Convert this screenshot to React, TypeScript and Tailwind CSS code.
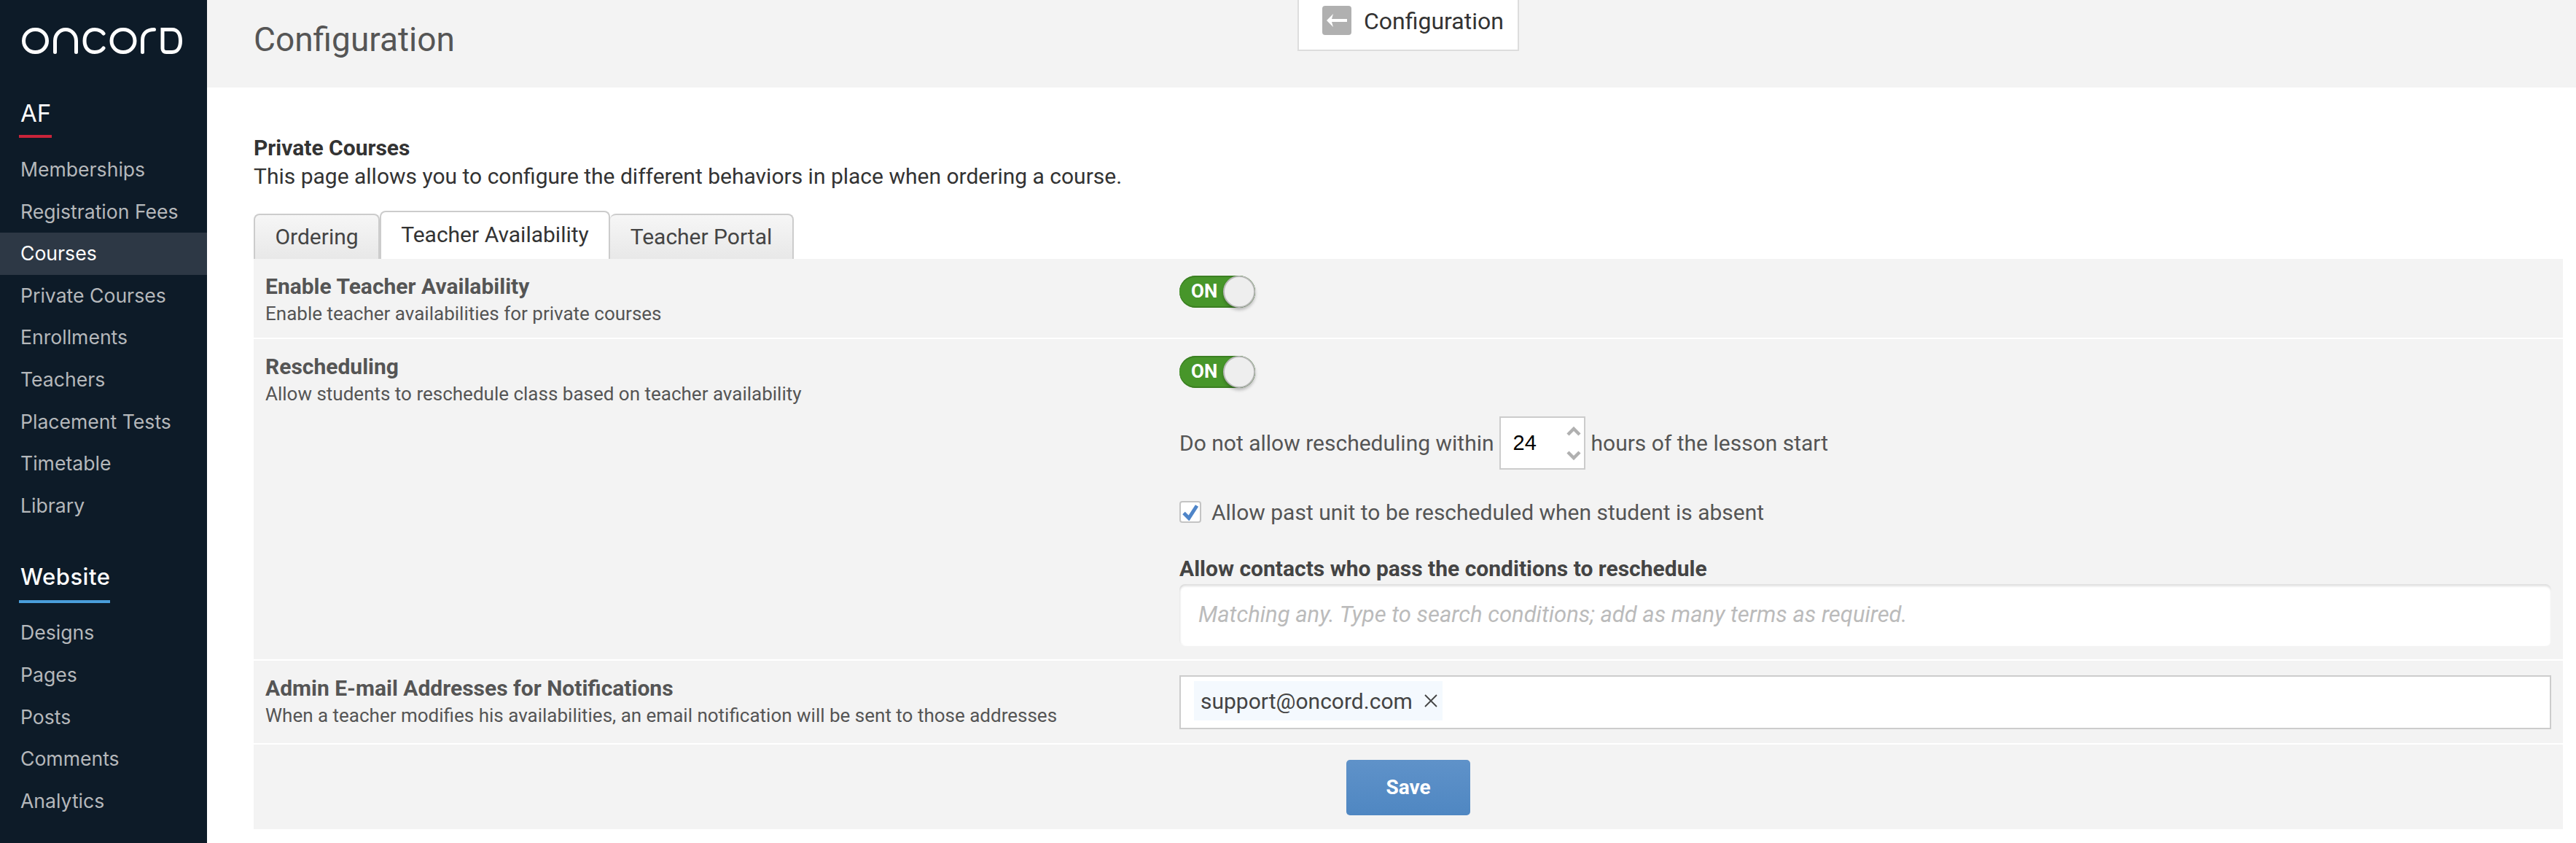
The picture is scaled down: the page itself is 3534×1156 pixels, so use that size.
const afLinks = [
  "Memberships",
  "Registration Fees",
  "Courses",
  "Private Courses",
  "Enrollments",
  "Teachers",
  "Placement Tests",
  "Timetable",
  "Library",
];
const websiteLinks = ["Designs", "Pages", "Posts", "Comments", "Analytics"];

const Logo = () => (
  <svg width="220" height="36" viewBox="0 0 220 36" fill="none" stroke="white" strokeWidth="5" strokeLinecap="round" className="block">
    <rect x="2.5" y="2.5" width="32" height="31" rx="15.5" />
    <path d="M45.5 33.5V18a14.5 15.5 0 0 1 29 0v15.5" />
    <path d="M112 8c-3-4-7-5.500-12-5.500C91 2.500 86 9 86 18s5 15.500 14 15.500c5 0 9-1.500 12-5.500" />
    <rect x="123" y="2.500" width="32" height="31" rx="15.500" />
    <path d="M165.500 33.500V17c0-9 6-14.500 16-14.500" />
    <path d="M193 2.500v26c0 3 2 5 5 5h8c8 0 11.500-7 11.500-15.500S214 2.500 206 2.500z" />
  </svg>
);

const NavItem = ({ label }: { label: string }) => (
  <a
    className={
      label === "Courses"
        ? "block h-[57.6px] leading-[57.6px] pl-[28px] bg-[#2d3845] text-white"
        : "block h-[57.6px] leading-[57.6px] pl-[28px] text-[#b5b8bb]"
    }
  >
    {label}
  </a>
);

const Toggle = () => (
  <div className="relative w-[104px] h-[44px] rounded-full bg-[#47962a] shadow-[inset_0_-2px_0_#3b7f22,inset_0_2px_0_#3b7f22]">
    <span className="absolute left-[16px] top-0 leading-[42px] text-[26px] font-bold text-white">ON</span>
    <span className="absolute right-0 top-0 w-[44px] h-[44px] rounded-full bg-[#eeeeee] border-2 border-[#b9b9b9] shadow-[0_3px_4px_rgba(0,0,0,0.25)]" />
  </div>
);

const Row = ({
  title,
  description,
  children,
}: {
  title: string;
  description: string;
  children: React.ReactNode;
}) => (
  <div className="flex bg-[#f3f3f3] mb-[2px]">
    <div className="w-[1270px] shrink-0 pl-4 pt-[18px]">
      <div className="text-[30px] leading-[40px] font-bold text-[#555555]">{title}</div>
      <div className="text-[26px] leading-[34px] text-[#555555]">{description}</div>
    </div>
    <div className="flex-1 pr-4">{children}</div>
  </div>
);

const App = () => {
  return (
    <div className="flex h-[1156px] overflow-hidden bg-white font-['Roboto',sans-serif]">
      <aside className="w-[284px] shrink-0 bg-[#0d1b28] font-['Inter',sans-serif] text-[26.6px]">
        <div className="pl-[30px] pt-[38px] pb-[61px]">
          <Logo />
        </div>
        <div className="pl-[28px] text-[33px] leading-[40px] text-white">AF</div>
        <div className="ml-[26px] mt-[10px] mb-[15px] w-[45px] h-[4px] bg-[#c9243a]" />
        {afLinks.map((link) => (
          <NavItem key={link} label={link} />
        ))}
        <div className="pl-[28px] mt-[49px] text-[31px] leading-[40px] font-medium tracking-[0.5px] text-white">Website</div>
        <div className="ml-[26px] mt-[12px] mb-[12px] w-[125px] h-[4px] bg-[#4a9edb]" />
        {websiteLinks.map((link) => (
          <NavItem key={link} label={link} />
        ))}
      </aside>

      <main className="flex-1 min-w-0">
        <header className="relative h-[120px] bg-[#f3f3f3]">
          <h1 className="pl-[64px] pt-[26px] text-[46px] leading-[56px] text-[#555555]">Configuration</h1>
          <div className="absolute left-[1496px] top-0 w-[304px] h-[70px] bg-white border-2 border-t-0 border-[#dddddd] flex items-start pl-[32px] pt-[8px]">
            <span className="flex w-[40px] h-[40px] rounded-[4px] bg-[#b0b0b0]">
              <svg width="40" height="40" viewBox="0 0 40 40" fill="white">
                <path d="M6 20l9-9-2 7h21v4H13l2 7z" />
              </svg>
            </span>
            <span className="ml-[17px] text-[32px] leading-[42px] text-[#333333]">Configuration</span>
          </div>
        </header>

        <div className="pl-[64px] pr-[18px] pt-[64px]">
          <div className="text-[30px] leading-[38px] font-bold text-[#333333]">Private Courses</div>
          <p className="text-[30px] leading-[40px] text-[#333333]">
            This page allows you to configure the different behaviors in place when ordering a course.
          </p>

          <div className="flex items-end mt-[27px] h-[66px] text-[30px]">
            <div className="h-[62px] w-[173px] border-2 border-b-0 border-[#cccccc] rounded-t-[8px] bg-gradient-to-b from-[#f6f6f6] to-[#e8e8e8] text-center leading-[60px] text-[#444444]">Ordering</div>
            <div className="h-[66px] w-[316px] border-2 border-b-0 border-[#cccccc] rounded-t-[8px] bg-white text-center leading-[62px] text-[#333333]">Teacher Availability</div>
            <div className="h-[62px] w-[252px] border-2 border-b-0 border-l-0 border-[#cccccc] rounded-t-[8px] bg-gradient-to-b from-[#f6f6f6] to-[#e8e8e8] text-center leading-[60px] text-[#444444]">Teacher Portal</div>
          </div>

          <Row title="Enable Teacher Availability" description="Enable teacher availabilities for private courses">
            <div className="h-[108px] pt-[23px]">
              <Toggle />
            </div>
          </Row>

          <Row title="Rescheduling" description="Allow students to reschedule class based on teacher availability">
            <div className="h-[439px] pt-[23px] text-[30px] text-[#555555]">
              <Toggle />
              <div className="flex items-center mt-[39px] h-[73px]">
                <span>Do not allow rescheduling within</span>
                <div className="relative ml-[7px] mr-[8px] w-[118px] h-[73px] bg-white border-2 border-[#cccccc] pl-[17px] leading-[69px] font-['Liberation_Sans',sans-serif] text-[29px] text-black">
                  24
                  <svg className="absolute left-[90px] top-[12px]" width="20" height="46" viewBox="0 0 20 46" fill="none" stroke="#b0b0b0" strokeWidth="4.500">
                    <path d="M2 11l8-8 8 8M2 35l8 8 8-8" />
                  </svg>
                </div>
                <span>hours of the lesson start</span>
              </div>
              <div className="flex items-center mt-[43px] h-[30px]">
                <span className="flex items-center justify-center w-[30px] h-[30px] rounded-[4px] bg-white border-2 border-[#c4c4c4]">
                  <svg width="24" height="24" viewBox="0 0 24 24" fill="none" stroke="#4f85c8" strokeWidth="5">
                    <path d="M3 13.500l7 7 11-17" />
                  </svg>
                </span>
                <span className="ml-[14px]">Allow past unit to be rescheduled when student is absent</span>
              </div>
              <div className="mt-[43px] text-[30px] leading-[40px] font-bold text-[#444444]">Allow contacts who pass the conditions to reschedule</div>
              <div className="mt-[1px] h-[85px] rounded-[8px] bg-white shadow-[inset_0_3px_3px_rgba(0,0,0,0.12),inset_2px_0_2px_rgba(0,0,0,0.04)] pl-[26px] text-[31px] leading-[83px] italic text-[#bbbbbb]">
                Matching any. Type to search conditions; add as many terms as required.
              </div>
            </div>
          </Row>

          <Row title="Admin E-mail Addresses for Notifications" description="When a teacher modifies his availabilities, an email notification will be sent to those addresses">
            <div className="h-[113px] pt-[20px]">
              <div className="h-[74px] bg-white border-2 border-[#cccccc] pl-[18px] pt-[6px]">
                <div className="inline-flex items-center h-[54px] w-[341px] bg-[#f4f9fe] pl-[9px] text-[30px] text-[#444444]">
                  support@oncord.com
                  <svg className="ml-[16px] shrink-0" width="18" height="18" viewBox="0 0 18 18" fill="none" stroke="#444444" strokeWidth="1.800">
                    <path d="M1 1l16 16M17 1L1 17" />
                  </svg>
                </div>
              </div>
            </div>
          </Row>

          <div className="flex h-[116px] bg-[#f3f3f3] pl-[1499px] pt-[21px]">
            <button className="w-[170px] h-[76px] rounded-[5px] bg-gradient-to-b from-[#5f92c9] to-[#4f87c2] text-[28px] font-bold text-white">Save</button>
          </div>
        </div>
      </main>
    </div>
  );
};

export default App;
